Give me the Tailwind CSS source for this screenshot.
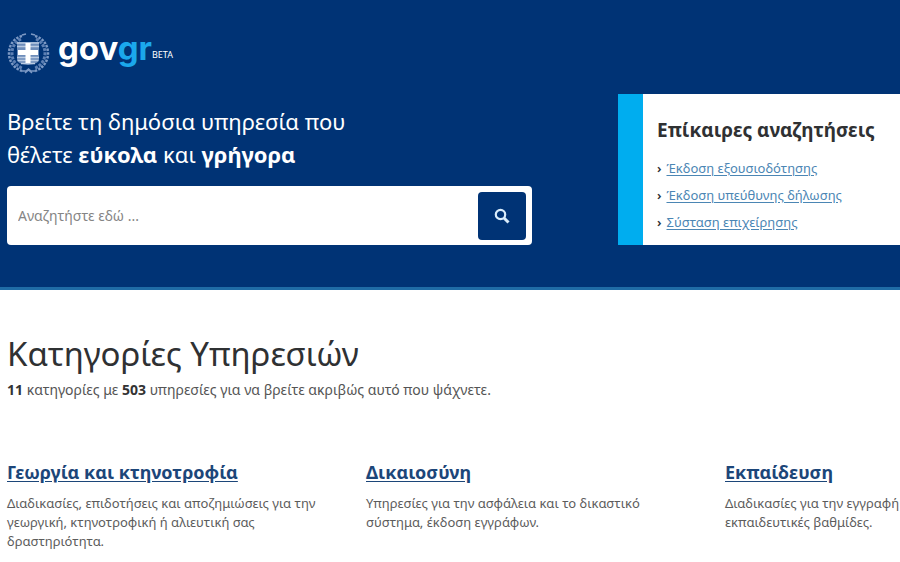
<!DOCTYPE html>
<html lang="el">

<head>
    <meta charset="UTF-8">
    <meta name="viewport" content="width=device-width, initial-scale=1.0">
    <script src="https://cdn.jsdelivr.net/npm/@tailwindcss/browser@4"></script>
    <title>gov.gr</title>
</head>

<body class="bg-white text-[#2f3133] font-['Noto_Sans',sans-serif] overflow-x-hidden">
    <header class="bg-[#003375] border-b-3 border-[#1f6ca6] pt-[27px] pb-[42px] pl-[7px]">
        <a href="#" class="flex items-center h-12 text-white" aria-label="govgr beta">
            <svg class="w-[43px] h-[43px] mt-1 shrink-0" viewBox="0 0 43 43" fill="none">
                <path d="M15 4C7 6 2 13 2 21.500S8 37 15 39M28 4c8 2 13 9 13 17.500S35 37 28 39" stroke="#7c99c4" stroke-width="2.500" stroke-dasharray="2.500 1.200" />
                <path d="M14 7C8 10 5 15 5 21.500S9 34 16 36.500M29 7c6 3 9 8 9 14.500S34 34 27 36.500" stroke="#5d80b4" stroke-width="3" stroke-dasharray="3 1.200" />
                <path d="M15 3l4-1M28 3l-4-1M15 39h4l2.500-2 2.500 2h4M18 41l3.500-3 3.500 3" stroke="#7c99c4" stroke-width="1.500" />
                <path d="M10 10h22v17c0 4-5 5-11 6-6-1-11-2-11-6z" fill="#6e8dba" />
                <path d="M10 11h22M10 14.500h22M10 25.500h22M10.500 28.500h21M14 31.500h14" stroke="#b9cae2" stroke-width="1.500" />
                <path d="M21 11v20M11 20.500h20" stroke="#fff" stroke-width="5" />
            </svg>
            <span class="ml-2 font-['Inter',sans-serif] font-bold text-[33px] leading-[44px] -mt-[6px]">gov<span class="text-[#1ba8ec]">gr</span></span>
            <span class="text-[9px] leading-3 mt-2">BETA</span>
        </a>
        <div class="flex items-start mt-[19px]">
            <div class="w-[525px] shrink-0 pt-[11px]">
                <h2 class="text-white text-[22px] leading-[33px]">Βρείτε τη δημόσια υπηρεσία που<br>θέλετε <strong>εύκολα</strong> και <strong>γρήγορα</strong></h2>
                <form class="mt-[15px] flex items-center bg-white rounded py-[5px] pl-[5px] pr-[6px] h-[59px]">
                    <label for="search" class="sr-only">Αναζήτηση</label>
                    <input id="search" type="text" placeholder="Αναζητήστε εδώ ..." class="grow min-w-0 h-full px-[6px] text-sm leading-6 placeholder:text-[#858585] outline-none">
                    <button type="submit" aria-label="Αναζήτηση" class="w-12 h-12 bg-[#003375] rounded flex items-center justify-center">
                        <svg class="w-4 h-4" viewBox="0 0 16 16" fill="none" stroke="#d9ecfb">
                            <circle cx="6.500" cy="6.500" r="4.700" stroke-width="2.200" />
                            <path d="M10 10l4.500 4.500" stroke-width="3" />
                        </svg>
                    </button>
                </form>
            </div>
            <aside class="ml-[86px] grow h-[151px] bg-white border-l-[25px] border-[#00adef] pl-[14px] pt-[22px] whitespace-nowrap">
                <h3 class="text-[19px] leading-7 font-bold">Επίκαιρες αναζητήσεις</h3>
                <ul class="mt-[11px] text-[13px] leading-[27px]">
                    <li class="flex gap-[5px]"><span class="font-semibold">›</span><a href="#" class="text-[#4b86b4] underline underline-offset-2">Έκδοση εξουσιοδότησης</a></li>
                    <li class="flex gap-[5px]"><span class="font-semibold">›</span><a href="#" class="text-[#4b86b4] underline underline-offset-2">Έκδοση υπεύθυνης δήλωσης</a></li>
                    <li class="flex gap-[5px]"><span class="font-semibold">›</span><a href="#" class="text-[#4b86b4] underline underline-offset-2">Σύσταση επιχείρησης</a></li>
                </ul>
            </aside>
        </div>
    </header>

    <main class="pl-[7px] pt-10 overflow-hidden">
        <h1 class="text-[33px] leading-[48px]">Κατηγορίες Υπηρεσιών</h1>
        <p class="text-sm leading-6 text-[#555]"><strong class="text-[#333]">11</strong> κατηγορίες με <strong class="text-[#333]">503</strong> υπηρεσίες για να βρείτε ακριβώς αυτό που ψάχνετε.</p>

        <div class="mt-14 grid grid-cols-[repeat(3,329px)] gap-[30px] text-[13px] leading-[19px] text-[#5c5c5c]">
            <section>
                <h2 class="text-lg leading-7 font-bold"><a href="#" class="text-[#1c4679] underline underline-offset-2">Γεωργία και κτηνοτροφία</a></h2>
                <p class="mt-2">Διαδικασίες, επιδοτήσεις και αποζημιώσεις για την γεωργική, κτηνοτροφική ή αλιευτική σας δραστηριότητα.</p>
            </section>
            <section>
                <h2 class="text-lg leading-7 font-bold"><a href="#" class="text-[#1c4679] underline underline-offset-2">Δικαιοσύνη</a></h2>
                <p class="mt-2">Υπηρεσίες για την ασφάλεια και το δικαστικό σύστημα, έκδοση εγγράφων.</p>
            </section>
            <section>
                <h2 class="text-lg leading-7 font-bold"><a href="#" class="text-[#1c4679] underline underline-offset-2">Εκπαίδευση</a></h2>
                <p class="mt-2">Διαδικασίες για την εγγραφή<br>εκπαιδευτικές βαθμίδες.</p>
            </section>
        </div>
    </main>
</body>

</html>
